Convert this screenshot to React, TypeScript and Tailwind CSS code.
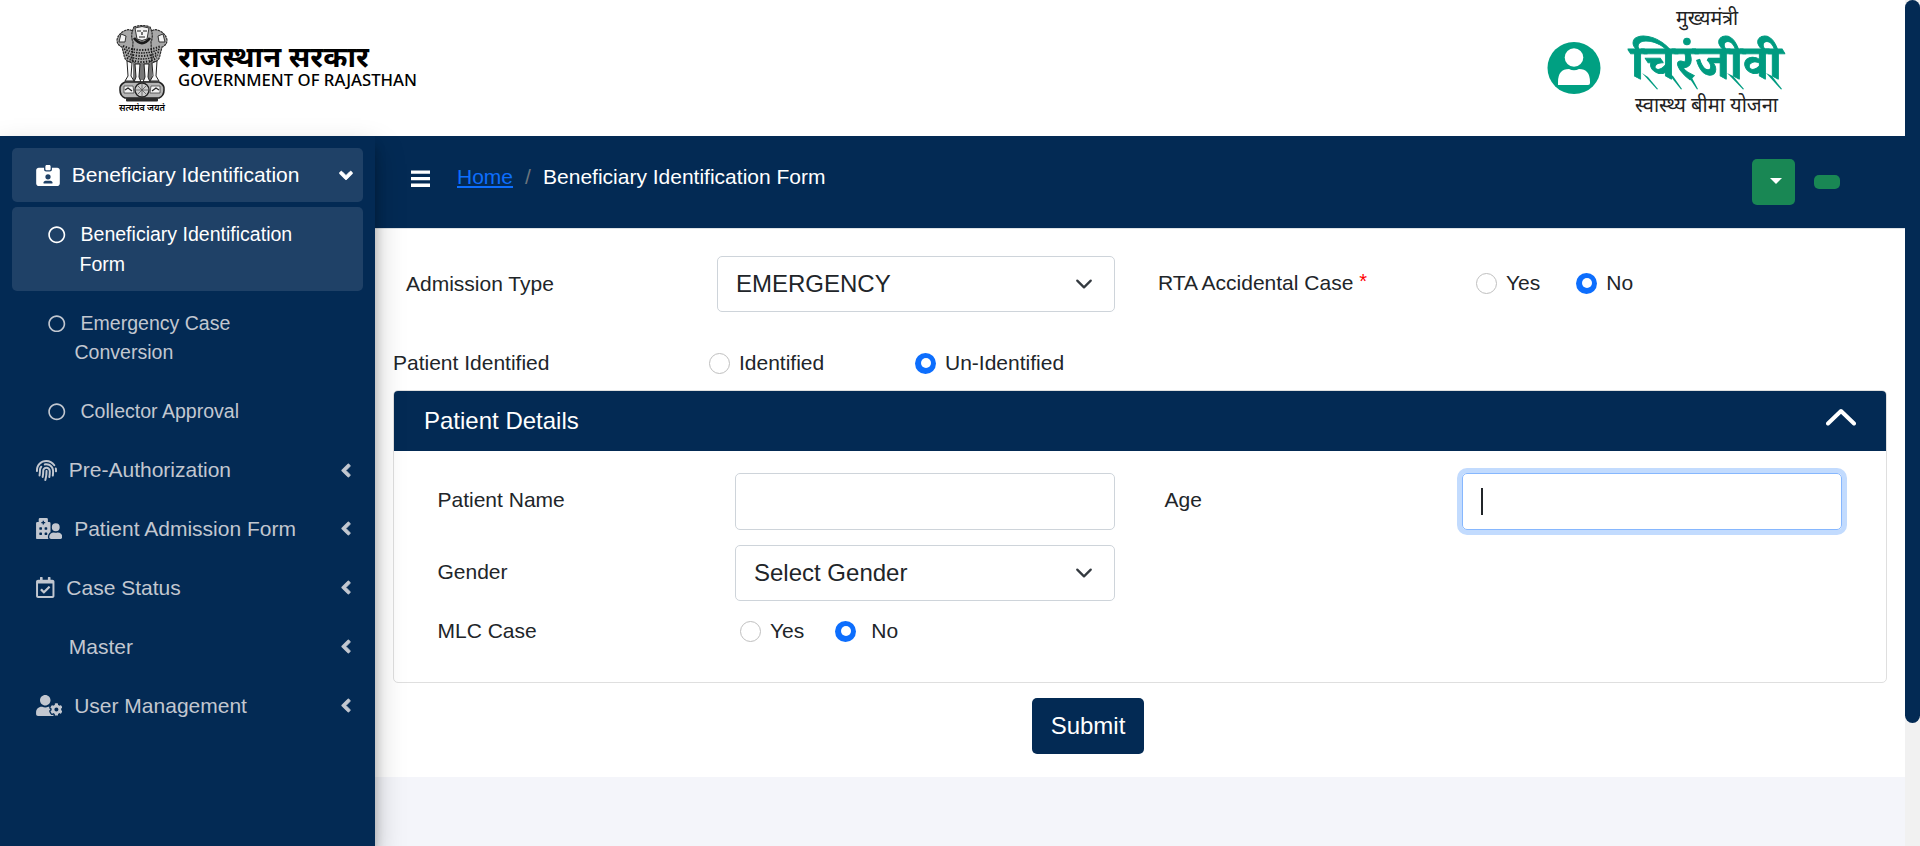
import { FaAngleDown, FaAngleLeft, FaFingerprint, FaHospitalUser, FaRegCalendarCheck, FaUserCog, FaRegCircle } from 'react-icons/fa';
import { FaIdCardClip } from 'react-icons/fa6';
import type { ReactNode } from 'react';

function Emblem() {
  return (
    <svg width="52" height="78" viewBox="0 0 52 78" className="block">
      <g fill="#a8a8a8" stroke="#2b2b2b" strokeWidth="1.200" strokeDasharray="2.500 .600">
        <path d="M8 6 Q13 3 18 7 L19 20 L18 37 Q9 38 8 30 L6 22 Q1 20 1 15 Q2 9 8 6Z" />
        <path d="M44 6 Q39 3 34 7 L33 20 L34 37 Q43 38 44 30 L46 22 Q51 20 51 15 Q50 9 44 6Z" />
        <path d="M18 2 Q26 -1 34 2 Q38 10 35 17 L36 35 Q31 41 26 41 Q21 41 16 35 L17 17 Q14 10 18 2Z" />
      </g>
      <g fill="#f3f3f3" stroke="#222" strokeWidth=".900">
        <path d="M19 3 Q26 0 33 3 L31 14 Q26 17 21 14Z" />
        <path d="M5 9 L10 11 L9 17 L3 17Z M47 9 L42 11 L43 17 L49 17Z" />
      </g>
      <g fill="none" stroke="#1a1a1a">
        <path d="M18 13 Q26 23 34 13" strokeWidth="2.800" />
        <path d="M21 6 H25 M27 6 H31 M26 7 V10 M23 12 H29" strokeWidth="1.200" />
        <path d="M7 21 Q26 29 45 21 M9 27 Q26 35 43 27 M11 33 Q26 41 41 33" strokeDasharray="1.300 1.500" strokeWidth="2" />
        <path d="M8 24 Q26 32 44 24 M10 30 Q26 38 42 30" strokeDasharray="1.500 1" strokeWidth="1.400" />
      </g>
      <path d="M17 38 H36 V55 H17Z" fill="#777" />
      <g fill="#f8f8f8" stroke="#222" strokeWidth="1">
        <path d="M11 36 L16 38 L15 51 L18 56 H9 L12 51Z" />
        <path d="M19 39 H24 L23 52 L25 57 H18 L20 52Z" />
        <path d="M28 39 H33 L32 52 L34 57 H27 L29 52Z" />
        <path d="M36 38 L41 36 L40 51 L43 56 H34 L37 51Z" />
      </g>
      <path d="M9 57 H43 Q49 60 48 65 Q48 71 43 73 H9 Q4 71 4 65 Q3 60 9 57Z" fill="#b5b5b5" stroke="#222" strokeWidth="1.600" />
      <path d="M8 61 H17 L18 68 H8Z M35 61 H44 V68 H34Z" fill="#f2f2f2" stroke="#444" strokeWidth=".800" />
      <path d="M9 65 L12 63 L16 66 M36 66 L40 63 L43 65" fill="none" stroke="#222" strokeWidth="1.200" />
      <circle cx="26" cy="65" r="7" fill="#ccc" stroke="#222" strokeWidth="1.300" />
      <path d="M26 59 V71 M20 65 H32 M22 61 L30 69 M30 61 L22 69" stroke="#555" strokeWidth=".800" />
      <rect x="10" y="73" width="32" height="3.500" rx="1" fill="#2a2a2a" />
    </svg>
  );
}

function Header() {
  return (
    <header className="flex h-[136px] shrink-0 justify-between bg-white pl-[116px] pr-[113px]">
      <div className="flex pt-[25px]">
        <div className="flex w-[52px] flex-col items-center">
          <Emblem />
          <svg width="52" height="14" className="block">
            <text x="3" y="8" fontSize="10" fontWeight="600" textLength="46" lengthAdjust="spacingAndGlyphs" className="font-['Noto_Sans_Devanagari','Noto_Sans',sans-serif]">सत्यमेव जयते</text>
          </svg>
        </div>
        <svg width="250" height="70" className="ml-[8px] mt-[12px] block">
          <text x="2" y="30" fontSize="28" fontWeight="700" textLength="191" lengthAdjust="spacingAndGlyphs" className="font-['Noto_Sans_Devanagari','Noto_Sans',sans-serif]">राजस्थान सरकार</text>
          <text x="2" y="49" fontSize="17" fontWeight="500" textLength="239" lengthAdjust="spacingAndGlyphs" className="font-['Noto_Sans','Open_Sans',sans-serif]">GOVERNMENT OF RAJASTHAN</text>
        </svg>
      </div>
      <div className="flex gap-[25px]">
        <svg width="54" height="54" viewBox="0 0 54 54" className="mt-[41px] block">
          <ellipse cx="27" cy="27" rx="26.500" ry="26" fill="#00a082" />
          <circle cx="27" cy="16.500" r="9.300" fill="#fff" />
          <path d="M11 44 V41 Q11 28 22 28 Q27 30.500 32 28 Q43 28 43 41 V42 Q43 44 41 44Z" fill="#fff" />
        </svg>
        <svg width="166" height="125" className="block">
          <text x="50" y="25" fontSize="20" fill="#222" textLength="62" lengthAdjust="spacingAndGlyphs" className="font-['Noto_Sans_Devanagari','Noto_Sans',sans-serif]">मुख्यमंत्री</text>
          <text x="5" y="79" fontSize="47" fontWeight="700" fill="#009b80" stroke="#009b80" strokeWidth=".800" textLength="151" lengthAdjust="spacingAndGlyphs" className="font-['Noto_Serif_Devanagari','Noto_Sans_Devanagari','Noto_Sans',sans-serif]">चिरंजीवी</text>
          <g fill="#009b80">
            <path d="M16 73 L22 77 L32 89 L31 89.500 Z" />
            <path d="M41 72 L47 76 L56 89 L55 89.500 Z" />
            <path d="M60 73 L65 76 L72 89 L71 89.500 Z" />
            <path d="M101 73 L107 76 L118 89 L117 89.500 Z" />
            <path d="M140 73 L146 76 L156 89 L155 89.500 Z" />
          </g>
          <text x="9" y="112" fontSize="21" fill="#222" textLength="143" lengthAdjust="spacingAndGlyphs" className="font-['Noto_Sans_Devanagari','Noto_Sans',sans-serif]">स्वास्थ्य बीमा योजना</text>
        </svg>
      </div>
    </header>
  );
}

function NavItem({ icon, label, active }: { icon: ReactNode; label: string; active?: boolean }) {
  return (
    <a className={active ? 'flex h-[54px] items-center rounded-[5px] bg-[#1f4167] pl-6 pr-[10px] text-white' : 'flex h-[54px] items-center pl-6 pr-[10px] text-[#c2c7d0]'}>
      {icon}
      <span className="ml-[11.800px] flex-1 whitespace-nowrap">{label}</span>
      {active ? <FaAngleDown className="w-[14px]" stroke="currentColor" strokeWidth="20" /> : <FaAngleLeft className="w-[14px]" stroke="currentColor" strokeWidth="20" />}
    </a>
  );
}

function SubItem({ children, active }: { children: ReactNode; active?: boolean }) {
  return (
    <a className={active ? 'flex items-start rounded-[5px] bg-[#1f4167] pb-[11.300px] pl-9 pt-[13.300px] text-[19.550px] leading-[29.600px] text-white' : 'flex items-start pb-[11.300px] pl-9 pt-[13.300px] text-[19.550px] leading-[29.600px] text-[#c2c7d0]'}>
      <FaRegCircle className="mt-[6px] size-[17.500px] shrink-0" />
      <span className="ml-[15px] whitespace-nowrap">{children}</span>
    </a>
  );
}

function Sidebar() {
  return (
    <aside className="relative z-10 flex w-[375px] shrink-0 flex-col gap-[4.850px] bg-[#032a54] px-3 pt-3 text-[21px] shadow-[0_14px_28px_rgba(0,0,0,.25),0_10px_10px_rgba(0,0,0,.22)]">
      <NavItem active icon={<FaIdCardClip className="w-[24px]" />} label="Beneficiary Identification" />
      <SubItem active>Beneficiary Identification<br /><span className="-ml-px">Form</span></SubItem>
      <SubItem>Emergency Case<br /><span className="-ml-[6px]">Conversion</span></SubItem>
      <SubItem>Collector Approval</SubItem>
      <NavItem icon={<FaFingerprint />} label="Pre-Authorization" />
      <NavItem icon={<FaHospitalUser className="w-[26.400px]" />} label="Patient Admission Form" />
      <NavItem icon={<FaRegCalendarCheck className="w-[18.500px]" />} label="Case Status" />
      <NavItem icon={<span className="w-[21px]" />} label="Master" />
      <NavItem icon={<FaUserCog className="w-[26.400px]" />} label="User Management" />
    </aside>
  );
}

function Radio({ checked, label, gap }: { checked?: boolean; label: string; gap?: boolean }) {
  return (
    <label className="flex items-center">
      <span className={checked ? 'flex size-[21px] items-center justify-center rounded-full bg-[#0d6efd]' : 'size-[21px] rounded-full border border-[#bfbfbf] bg-white'}>
        {checked && <span className="size-[10px] rounded-full bg-white" />}
      </span>
      <span className={gap ? 'ml-[15px]' : 'ml-[9px]'}>{label}</span>
    </label>
  );
}

function Select({ value }: { value: string }) {
  return (
    <div className="flex h-[56px] w-full items-center justify-between rounded-[5px] border border-[#ced4da] bg-white pl-[18px] pr-[21px] text-[24px]">
      {value}
      <svg width="18" height="18" viewBox="0 0 16 16" fill="none" stroke="#343a40" strokeWidth="2" strokeLinecap="round" strokeLinejoin="round"><path d="m2 5 6 6 6-6" /></svg>
    </div>
  );
}

function TopBar() {
  return (
    <nav className="flex h-[93px] items-start border-b border-[#dee2e6] bg-[#032a54] pl-[35.500px] pr-[65px]">
      <svg width="19" height="18" viewBox="0 0 19 18" fill="#fff" className="mt-[33.500px]"><path d="M0 .500h19v3.300H0zM0 7h19v3.300H0zM0 13.600h19v3.300H0z" /></svg>
      <div className="ml-[27.500px] mt-[26px] flex leading-[30px]">
        <a className="text-[#0d6efd] underline">Home</a>
        <span className="w-[30px] text-center text-[#6c757d]">/</span>
        <span className="text-white">Beneficiary Identification Form</span>
      </div>
      <div className="ml-auto flex items-start">
        <button className="mt-[23px] flex h-[46px] w-[43px] items-center justify-center rounded-[5px] bg-[#198754] pl-[5px]">
          <span className="-mt-[2px] border-x-[6px] border-t-[6px] border-x-transparent border-t-white" />
        </button>
        <span className="ml-[19px] mt-[39px] h-[14px] w-[26px] rounded-[5px] bg-[#198754]" />
      </div>
    </nav>
  );
}

function PatientCard() {
  return (
    <section className="mt-[11px] h-[293px] w-[1494px] shrink-0 overflow-hidden rounded-[5px] border border-[#dfdfdf]">
      <div className="flex h-[60px] items-center justify-between bg-[#032a54] pl-[30px] pr-[30px] text-[24px] text-white">
        <h2>Patient Details</h2>
        <svg width="30" height="18" viewBox="0 0 30 18" className="-mt-[9px]" fill="none" stroke="#fff" strokeWidth="4" strokeLinecap="round" strokeLinejoin="round"><path d="M2 15.500 15 3 28 15.500" /></svg>
      </div>
      <div className="grid grid-cols-[297.500px_380px_49.500px_297.500px_380px] gap-y-[15px] pl-[43.500px] pt-[22px]">
        <label className="pt-[11px] leading-[32px]">Patient Name</label>
        <div className="h-[57px] rounded-[5px] border border-[#ced4da]" />
        <span />
        <label className="pt-[11px] leading-[32px]">Age</label>
        <div className="flex h-[57px] items-center rounded-[5px] border border-[#86b7fe] pl-[18px] shadow-[0_0_0_5px_#c2dbfe]">
          <span className="h-[27px] w-[2px] bg-[#212529]" />
        </div>
        <label className="pt-[11px] leading-[32px]">Gender</label>
        <Select value="Select Gender" />
      </div>
      <div className="mt-[14px] flex items-center pl-[43.500px] leading-[32px]">
        <span className="w-[302.500px]">MLC Case</span>
        <Radio label="Yes" />
        <span className="w-[31px]" />
        <Radio checked gap label="No" />
      </div>
    </section>
  );
}

function AdmissionForm() {
  return (
    <main className="flex h-[548px] flex-col bg-white pl-[18px] pt-[27px]">
      <div className="flex h-[56px] items-center">
        <span className="w-[324px] pl-[13px]">Admission Type</span>
        <div className="w-[398px]"><Select value="EMERGENCY" /></div>
        <div className="-mt-[2px] flex items-center pl-[43px]">
          <span className="w-[318px]">RTA Accidental Case <sup className="-top-[2px] text-[20px] text-[#f00]">*</sup></span>
          <Radio label="Yes" />
          <span className="w-[36px]" />
          <Radio checked label="No" />
        </div>
      </div>
      <div className="mt-[35px] flex h-[32px] items-center">
        <span className="w-[316px]">Patient Identified</span>
        <span className="w-[206px]"><Radio label="Identified" /></span>
        <Radio checked label="Un-Identified" />
      </div>
      <PatientCard />
      <button className="ml-[639px] mt-[15px] h-[56px] w-[112px] shrink-0 rounded-[5px] bg-[#032a54] text-[24px] text-white">Submit</button>
    </main>
  );
}

export default function App() {
  return (
    <div className="flex h-[846px] w-[1920px] overflow-hidden bg-[#f4f6f9] font-['Liberation_Sans',Arial,sans-serif] text-[21px] text-[#212529]">
      <div className="flex w-[1905px] flex-col">
        <Header />
        <div className="flex flex-1">
          <Sidebar />
          <div className="w-[1530px] bg-[#f4f5fa]">
            <TopBar />
            <AdmissionForm />
          </div>
        </div>
      </div>
      <div className="w-[15px] bg-[#f1f1f1]">
        <div className="h-[723px] rounded-[7.500px] bg-[#032a54]" />
      </div>
    </div>
  );
}
